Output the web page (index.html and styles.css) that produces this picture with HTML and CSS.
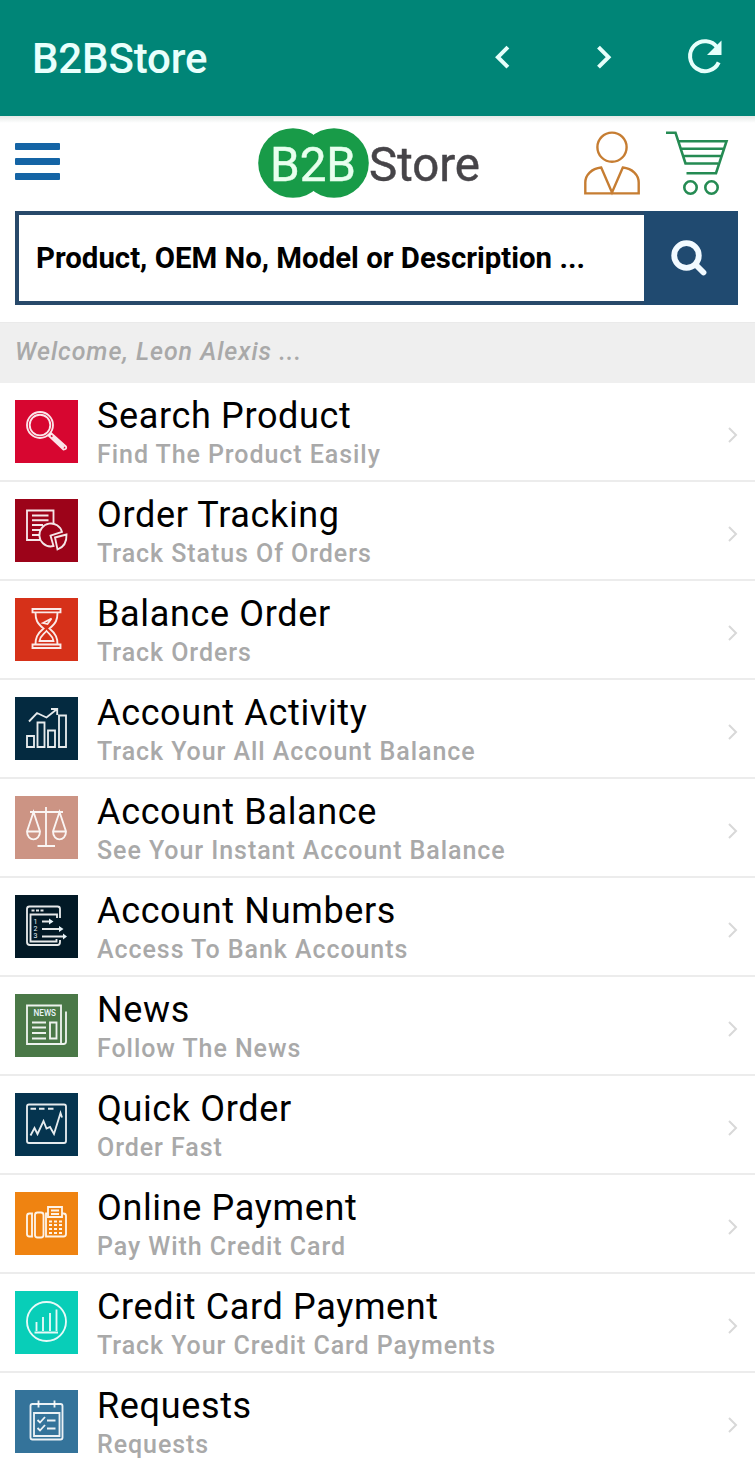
FILE: index.html
```html
<!DOCTYPE html>
<html lang="en">
<head>
<meta charset="utf-8">
<title>B2BStore</title>
<link rel="stylesheet" href="styles.css">
</head>
<body>
<header class="appbar">
  <h1 class="appbar-title">B2BStore</h1>
  <nav class="appbar-nav">
    <svg class="nav-icon" viewBox="0 0 48 48"><path d="M29.500 13L19.500 23L29.500 33" transform="translate(-.6 .2)"/></svg>
    <svg class="nav-icon" viewBox="0 0 48 48"><path d="M18.500 13L28.500 23L18.500 33" transform="translate(0 .2)"/></svg>
    <svg class="nav-icon" viewBox="0 0 48 48"><path d="M36.300 13.500A15 15 0 1 0 37.700 28.400" /><path class="solid" d="M40.500 6.500V21H26Z"/></svg>
  </nav>
</header>
<section class="brandbar">
  <div class="burger"><i></i><i></i><i></i></div>
  <svg class="logo" viewBox="0 0 230 76">
    <circle cx="38" cy="38" r="34.800"/><circle cx="79" cy="38" r="34.800"/>
    <text class="logo-b2b" x="15" y="56" textLength="86" lengthAdjust="spacingAndGlyphs">B2B</text>
    <text class="logo-store" x="114" y="56" textLength="111" lengthAdjust="spacingAndGlyphs">Store</text>
  </svg>
  <div class="actions">
    <svg class="user" viewBox="0 0 60 68"><circle cx="30" cy="17.200" r="14.600"/><path d="M19.200 37.500C9.500 38.500 3.300 45 3.300 52.500V63.400H56.700V52.500C56.700 45 50.500 38.500 40.800 37.500L30 62.500Z"/></svg>
    <svg class="cart" viewBox="0 0 64 68"><path d="M1 2.700H10.500L20.500 33.500H53M13.500 11.300H61.500L51 43.200H21.500M16 18.700H58.500M18 26H56"/><circle cx="25.500" cy="57.500" r="6.200"/><circle cx="46.500" cy="57.500" r="6.200"/></svg>
  </div>
</section>
<form class="search">
  <div class="search-field">Product, OEM No, Model or Description ...</div>
  <div class="search-button"><svg viewBox="0 0 40 40"><circle cx="15.500" cy="17.500" r="12.300"/><path d="M24.500 26.500L32.500 34.500"/></svg></div>
</form>
<p class="welcome">Welcome, Leon Alexis ...</p>
<ul class="menu">
  <li class="item">
    <svg class="tile t-search" viewBox="0 0 63 63"><circle cx="25" cy="25" r="13"/><circle cx="25" cy="25" r="10.300"/><path d="M34 36L36.500 33.500L51 46.500Q52 49.500 48.500 49.500ZM37.500 36.500L49 47.500"/></svg>
    <div class="copy"><h2>Search Product</h2><p>Find The Product Easily</p></div><svg class="chev" viewBox="0 0 12 18"><path d="M2 2L9 9L2 16"/></svg>
  </li>
  <li class="item">
    <svg class="tile t-track" viewBox="0 0 63 63"><path d="M25 41H12V11.500H38.500V24M17 16.500H33.500M17 21.200H33.500M17 26H28M17 31H25M17 36H24"/><path d="M35.500 47.500A11.500 11.500 0 1 1 47 33L35.500 36.500L38.500 47Z"/><path d="M40 38.500L51.500 35.500Q52 47 42.500 50.500Z"/></svg>
    <div class="copy"><h2>Order Tracking</h2><p>Track Status Of Orders</p></div><svg class="chev" viewBox="0 0 12 18"><path d="M2 2L9 9L2 16"/></svg>
  </li>
  <li class="item">
    <svg class="tile t-balance" viewBox="0 0 63 63"><path d="M17.500 11H45.500V14.300H17.500ZM17.500 46.500H45.500V50H17.500ZM20.500 14.500C20.500 22 22 25 28.500 30.500C22 36 20.500 40 20.500 46.300M42.500 14.500C42.500 22 41 25 34.500 30.500C41 36 42.500 40 42.500 46.300M28 25L36.500 20.500L32.500 26ZM24.500 43C25 38 28 37 31.500 33C35 37 38 38 38.500 43Z"/></svg>
    <div class="copy"><h2>Balance Order</h2><p>Track Orders</p></div><svg class="chev" viewBox="0 0 12 18"><path d="M2 2L9 9L2 16"/></svg>
  </li>
  <li class="item">
    <svg class="tile t-activity" viewBox="0 0 63 63"><path d="M12 39H19V50H12ZM22.500 25.500H29.500V50H22.500ZM33 33.500H40V50H33ZM44 18.500H51V50H44ZM14 24.500L22 16L31.500 20.500L41.500 12.500M36 12H42.200V18"/></svg>
    <div class="copy"><h2>Account Activity</h2><p>Track Your All Account Balance</p></div><svg class="chev" viewBox="0 0 12 18"><path d="M2 2L9 9L2 16"/></svg>
  </li>
  <li class="item">
    <svg class="tile t-scales" viewBox="0 0 63 63"><path d="M31 11V50M22.500 50H40M15 16H48M18.500 16L12 35.500C12 46 25 46 25 35.500ZM44.500 16L38 35.500C38 46 51 46 51 35.500ZM12 35.500H25M38 35.500H51"/></svg>
    <div class="copy"><h2>Account Balance</h2><p>See Your Instant Account Balance</p></div><svg class="chev" viewBox="0 0 12 18"><path d="M2 2L9 9L2 16"/></svg>
  </li>
  <li class="item">
    <svg class="tile t-numbers" viewBox="0 0 63 63"><path d="M45 23V14Q45 11.500 42.500 11.500H14.500Q12 11.500 12 14V47Q12 50 15 50H42.500Q45 50 45 47V45M42 23V19.500H15.500V46.500H41.500V44M16.500 15.500H19.500M21 15.500H24M25.500 15.500H28.500M27 26.500H35M27 34H45M27 41.500H49"/><path class="fill" d="M34 23.500L38.500 26.500L34 29.500ZM44 31L48.500 34L44 37ZM48 38.500L52 41.500L48 44.500Z"/><text class="num" x="18.500" y="29">1</text><text class="num" x="18.500" y="36.200">2</text><text class="num" x="18.500" y="43.400">3</text></svg>
    <div class="copy"><h2>Account Numbers</h2><p>Access To Bank Accounts</p></div><svg class="chev" viewBox="0 0 12 18"><path d="M2 2L9 9L2 16"/></svg>
  </li>
  <li class="item">
    <svg class="tile t-news" viewBox="0 0 63 63"><path d="M12 11.500H46V50H12ZM46 50H48.500Q51 50 51 47.500V17.500M17 28.500H31M17 33.500H31M17 39H31M17 44.500H31M35 28.500H41.500V44.500H35Z"/><text class="news" x="18.500" y="22" textLength="22.500" lengthAdjust="spacingAndGlyphs">NEWS</text></svg>
    <div class="copy"><h2>News</h2><p>Follow The News</p></div><svg class="chev" viewBox="0 0 12 18"><path d="M2 2L9 9L2 16"/></svg>
  </li>
  <li class="item">
    <svg class="tile t-quick" viewBox="0 0 63 63"><rect x="12" y="11.500" width="39" height="38.500" rx="2"/><path d="M15.500 15.700H21M24 15.700H29.500M33 15.700H38.500M15.500 42.500L19.500 35L22.500 41L28.500 28L31.500 35.500L35 34L39 41L45.500 20L47 24.500"/></svg>
    <div class="copy"><h2>Quick Order</h2><p>Order Fast</p></div><svg class="chev" viewBox="0 0 12 18"><path d="M2 2L9 9L2 16"/></svg>
  </li>
  <li class="item">
    <svg class="tile t-online" viewBox="0 0 63 63"><path d="M17 21.500H14.500Q12 21.500 12 24V42Q12 44.500 14.500 44.500H17ZM33 25V15H47V25ZM33 21.500H31V44.500H48.500Q51 44.500 51 42V24Q51 21.500 48.500 21.500H47M36 18.500H44M36 22H44"/><rect x="20" y="20.500" width="8.500" height="25" rx="2.500"/><path d="M34 29.500H37M39 29.500H42M44 29.500H47M34 33H37M39 33H42M44 33H47M34 37H37M39 37H42M44 37H47M34 41H37M39 41H42M44 41H47"/></svg>
    <div class="copy"><h2>Online Payment</h2><p>Pay With Credit Card</p></div><svg class="chev" viewBox="0 0 12 18"><path d="M2 2L9 9L2 16"/></svg>
  </li>
  <li class="item">
    <svg class="tile t-credit" viewBox="0 0 63 63"><circle cx="31.500" cy="30.500" r="19.500"/><path d="M19.500 41.500H43M21.500 40V31M28 40V26M35 40V22M41.500 40V18.500"/></svg>
    <div class="copy"><h2>Credit Card Payment</h2><p>Track Your Credit Card Payments</p></div><svg class="chev" viewBox="0 0 12 18"><path d="M2 2L9 9L2 16"/></svg>
  </li>
  <li class="item">
    <svg class="tile t-requests" viewBox="0 0 63 63"><rect x="15.500" y="14" width="32" height="35.500" rx="2"/><path d="M19 23H44.500V46H19ZM23.500 10.500V17.500M39.500 10.500V17.500M22.500 30L25 32.500L30 27M22.500 38L25 40.500L30 35M32 30.500H40.500M32 38.500H40.500"/></svg>
    <div class="copy"><h2>Requests</h2><p>Requests</p></div><svg class="chev" viewBox="0 0 12 18"><path d="M2 2L9 9L2 16"/></svg>
  </li>
</ul>
</body>
</html>
```
FILE: styles.css
```css
* { box-sizing: border-box; }
body { margin: 0; width: 755px; height: 1470px; overflow: hidden; background: #fff; font-family: Roboto, sans-serif; color: #000; }
h1, h2, p, ul { margin: 0; padding: 0; }
svg { display: block; flex: none; fill: none; }

.appbar { height: 116px; padding: 0 26px 0 32px; display: flex; align-items: center; justify-content: space-between; background: #008577; color: #e9fffc; }
.appbar-title { padding-top: 2px; font-size: 42px; line-height: 48px; font-weight: 500; letter-spacing: -.150px; }
.appbar-nav { display: flex; gap: 53px; }
.nav-icon { width: 48px; height: 48px; stroke: #e6fffb; stroke-width: 4; }
.nav-icon .solid { fill: #e6fffb; stroke: none; }

.brandbar { height: 95px; padding: 9px 26px 0 15px; display: flex; align-items: flex-start; background: linear-gradient(#e4e9e6, #fff 7px); }
.burger { width: 45px; padding-top: 18px; display: grid; gap: 8px; }
.burger i { height: 7px; border-radius: 1px; background: #1464a5; }
.logo { width: 230px; height: 76px; margin-left: 195px; }
.logo circle { fill: #189b48; }
.logo-b2b { font-size: 49px; fill: #e8ffee; stroke: #e8ffee; stroke-width: .5; }
.logo-store { font-size: 49px; fill: #464448; stroke: #464448; stroke-width: .5; }
.actions { display: flex; gap: 23px; margin: 5px 0 0 97px; }
.user { width: 60px; height: 68px; stroke: #c67d32; stroke-width: 2.4; }
.cart { width: 64px; height: 68px; stroke: #258b53; stroke-width: 2.6; }

.search { margin: 0 17px 0 15px; height: 94px; display: flex; border: 4px solid #28496a; background: #fff; }
.search-field { flex: 1; padding-left: 17px; font-size: 29.400px; line-height: 87px; font-weight: 700; white-space: nowrap; }
.search-button { width: 94px; margin: -4px; background: #204a70; display: flex; align-items: center; justify-content: center; }
.search-button svg { width: 40px; height: 40px; stroke: #f2faff; stroke-width: 5.800; stroke-linecap: round; }

.welcome { height: 61px; margin-top: 17px; padding-left: 15px; background: #efefef; border-top: 1px solid #eaeaea; color: #a9a9a9; font-size: 25px; line-height: 58px; font-style: italic; font-weight: 500; letter-spacing: .960px; }

.menu { list-style: none; }
.item { height: 99px; padding: 0 16px 0 15px; display: flex; align-items: flex-start; border-bottom: 2px solid #ececec; }
.item:last-child { border-bottom: 0; }
.tile { width: 63px; height: 63px; margin-top: 17px; stroke: #fff; stroke-opacity: .9; stroke-width: 1.850; }
.tile .fill, .tile text { fill: #e8f4fa; stroke: none; }
.num { font-size: 7px; }
.news { font-size: 9px; font-weight: 500; }
.copy { flex: 1; margin-left: 19px; white-space: nowrap; }
.copy h2 { padding-top: 11px; font-size: 36px; line-height: 44px; font-weight: 400; letter-spacing: .650px; }
.copy p { font-size: 25px; line-height: 34px; font-weight: 500; letter-spacing: .940px; color: #a9a9a9; }
.chev { width: 12px; height: 18px; margin-top: 43px; stroke: #d8d8d8; stroke-width: 2; }

.t-search { background: #d70630; }
.t-track { background: #9c0319; }
.t-balance { background: #d63119; }
.t-activity { background: #042a40; }
.t-scales { background: #cc9484; }
.t-numbers { background: #021926; }
.t-news { background: #4a7847; }
.t-quick { background: #05344f; }
.t-online { background: #ef8311; }
.t-credit { background: #08ceb8; }
.t-requests { background: #34739a; }
```
